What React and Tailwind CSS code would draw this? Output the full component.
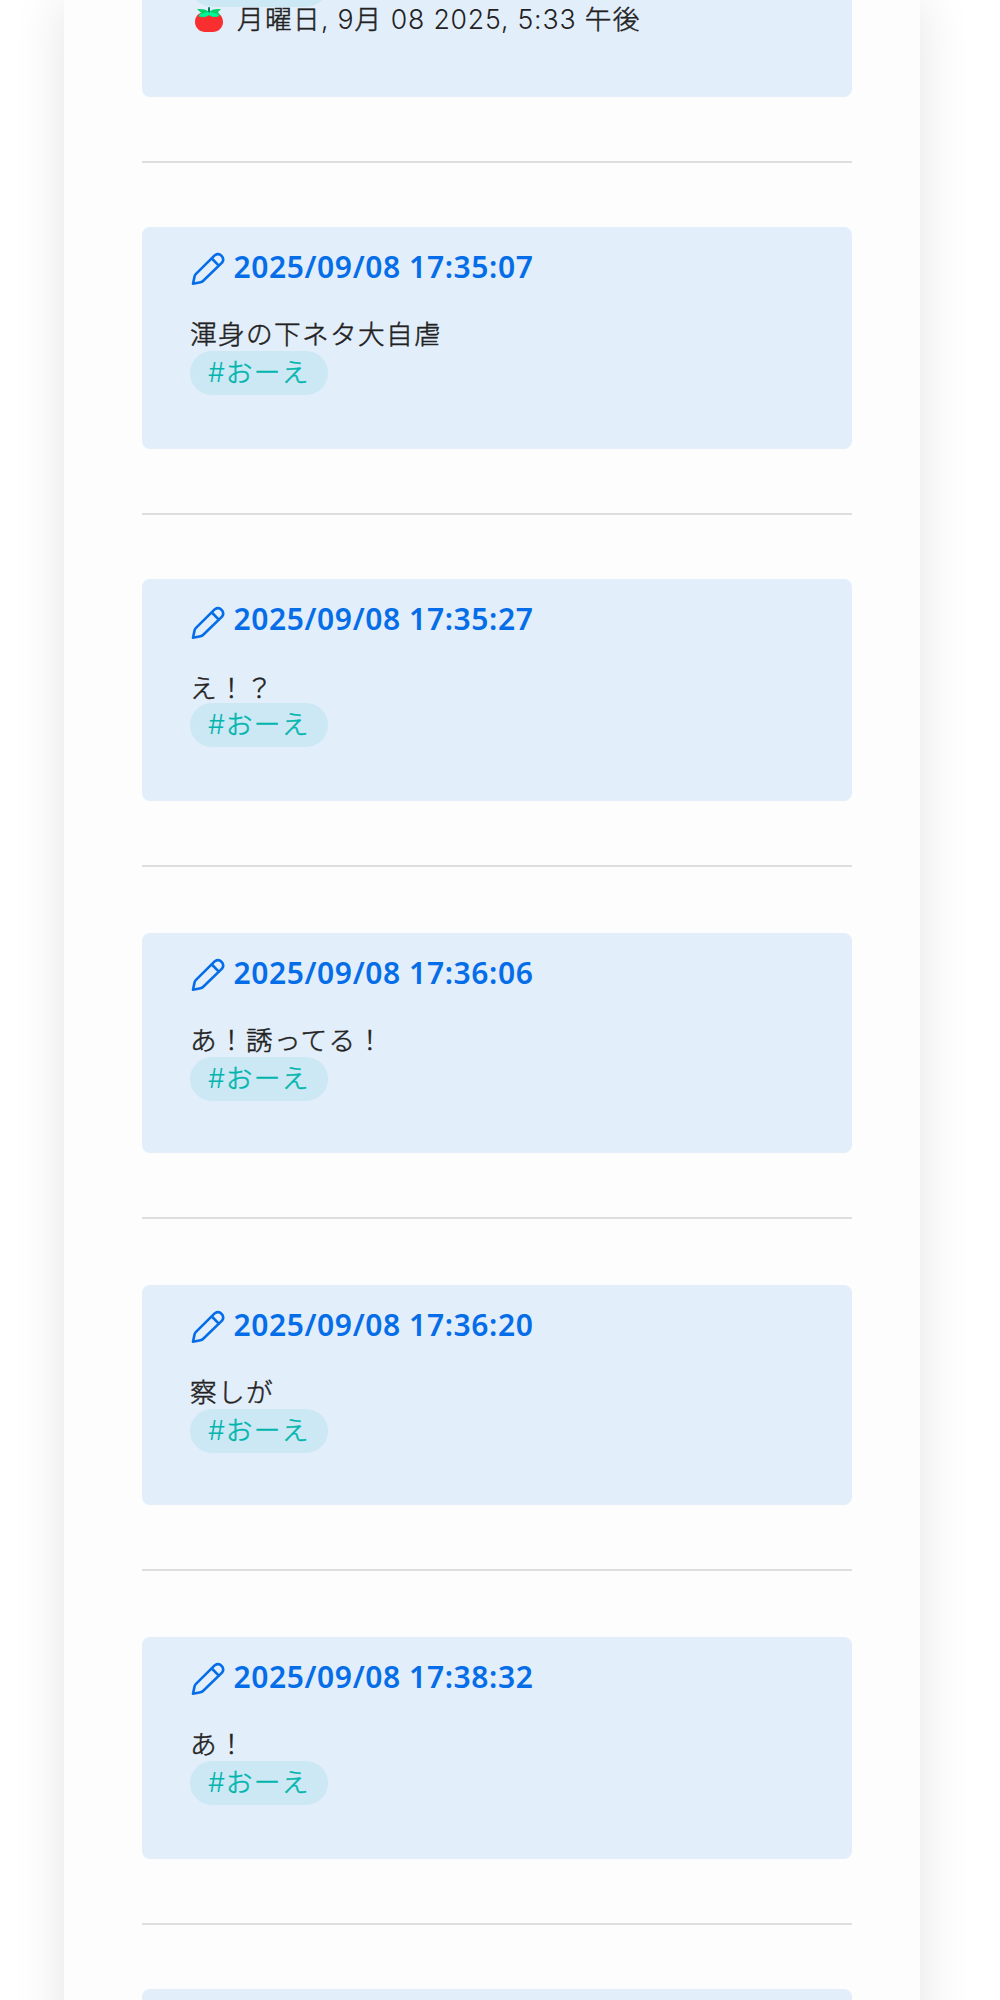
// src/pages/Timeline.jsx
import React from "react";

const entries = [
  { time: "2025/09/08 17:35:07", text: "渾身の下ネタ大自虐", tag: "おーえ", gap: "mb-16", height: "h-[222px]" },
  { time: "2025/09/08 17:35:27", text: "え！？", tag: "おーえ", gap: "mb-16", height: "h-[222px]", low: true },
  { time: "2025/09/08 17:36:06", text: "あ！誘ってる！", tag: "おーえ", gap: "mb-[66px]", height: "h-[220px]" },
  { time: "2025/09/08 17:36:20", text: "察しが", tag: "おーえ", gap: "mb-[66px]", height: "h-[220px]" },
  { time: "2025/09/08 17:38:32", text: "あ！", tag: "おーえ", gap: "mb-[66px]", height: "h-[222px]" },
];

function PencilIcon({ className }) {
  return (
    <svg
      viewBox="0 0 36 36"
      fill="none"
      stroke="currentColor"
      strokeWidth="2.6"
      strokeLinecap="round"
      strokeLinejoin="round"
      className={className}
    >
      <path d="M3 32.7L4.600 25.200Q4.900 24 6 22.900L24.900 4.200A5.200 5.200 0 0 1 32 11.600L13 30Q12 31 10.500 31.300Z" />
      <path d="M21.800 7.500L28.800 14.600" />
    </svg>
  );
}

function TomatoIcon({ className }) {
  return (
    <svg viewBox="0 0 28 26" className={className}>
      <path d="M14 5C6 3.500 0 8 0 15C0 21 5 25 10 25H18C23 25 28 21 28 15C28 8 22 3.500 14 5Z" fill="#f92f2f" />
      <path d="M2 2.200C6 1.500 10 2 14 4.500C18 2 22 1.500 26 2.200L23 5L25 8C22 10.500 18 11 14 8C10 11 6 10.500 3.500 9.500L6 5.500Z" fill="#00d26a" />
      <path d="M5 7L14 4.500L23 7L24 9C20 10.500 17 10 14 8C11 10 8 10.500 4 9Z" fill="#00f397" />
      <path d="M14 1V4.500" stroke="#008463" strokeWidth="2" strokeLinecap="round" />
    </svg>
  );
}

// Digits and punctuation are set tighter than the kana
function Latin({ children }) {
  return <span className="tracking-[0.8px] whitespace-pre [-webkit-text-stroke:0px]">{children}</span>;
}

function Tag({ label }) {
  return (
    <span className="flex h-11 w-[138px] items-center rounded-full bg-[#cbe8f4] pb-0.5 pl-[18px] text-[#00b5ad]">
      {label && <Latin>#</Latin>}
      {label}
    </span>
  );
}

function Entry({ time, text, tag, height, low }) {
  return (
    <article className={`${height} rounded-lg bg-[#e2eefa] px-12 pt-5`}>
      <h2 className="flex h-10 text-[30px] leading-10 font-semibold tracking-[0.6px] text-[#056de8] font-['Noto_Sans',sans-serif] [-webkit-text-stroke:0px]">
        <PencilIcon className={`${low ? "mt-1.5" : "mt-1"} mr-[7.500px] size-9 shrink-0`} />
        {time}
      </h2>
      <p className={`${low ? "pt-[3px]" : "pt-px"} mt-[29px] h-[35px] leading-[35px]`}>{text}</p>
      <Tag label={tag} />
    </article>
  );
}

export default function App() {
  return (
    <div className="h-[2000px] overflow-hidden bg-white">
      <main className="ml-16 h-[2100px] w-[856px] bg-[#fdfdfd] pr-[68px] pl-[78px] font-['Inter','Noto_Sans_CJK_JP',sans-serif] text-[26.670px] font-light tracking-[1.330px] text-[#222] shadow-[0_0_50px_rgba(0,0,0,0.11)] [-webkit-text-stroke:0.5px]">
        {/* Tail of the previous entry */}
        <div className="h-[97px] rounded-b-lg bg-[#e2eefa] px-12">
          <div className="flex h-[7px] items-end overflow-hidden">
            <Tag />
          </div>
          <p className="flex h-6 items-center pl-[5px]">
            <TomatoIcon className="mt-0.5 mr-3.5 h-[26px] w-7 shrink-0" />
            <span>
              月曜日<Latin>, 9</Latin>月<Latin> 08 2025, 5:33 </Latin>午後
            </span>
          </p>
        </div>
        {entries.map((entry) => (
          <React.Fragment key={entry.time}>
            <hr className={`mt-16 ${entry.gap} border-t-2 border-[#dedede]`} />
            <Entry {...entry} />
          </React.Fragment>
        ))}
        <hr className="mt-16 mb-16 border-t-2 border-[#dedede]" />
        <div className="h-[222px] rounded-lg bg-[#e2eefa]" />
      </main>
    </div>
  );
}
